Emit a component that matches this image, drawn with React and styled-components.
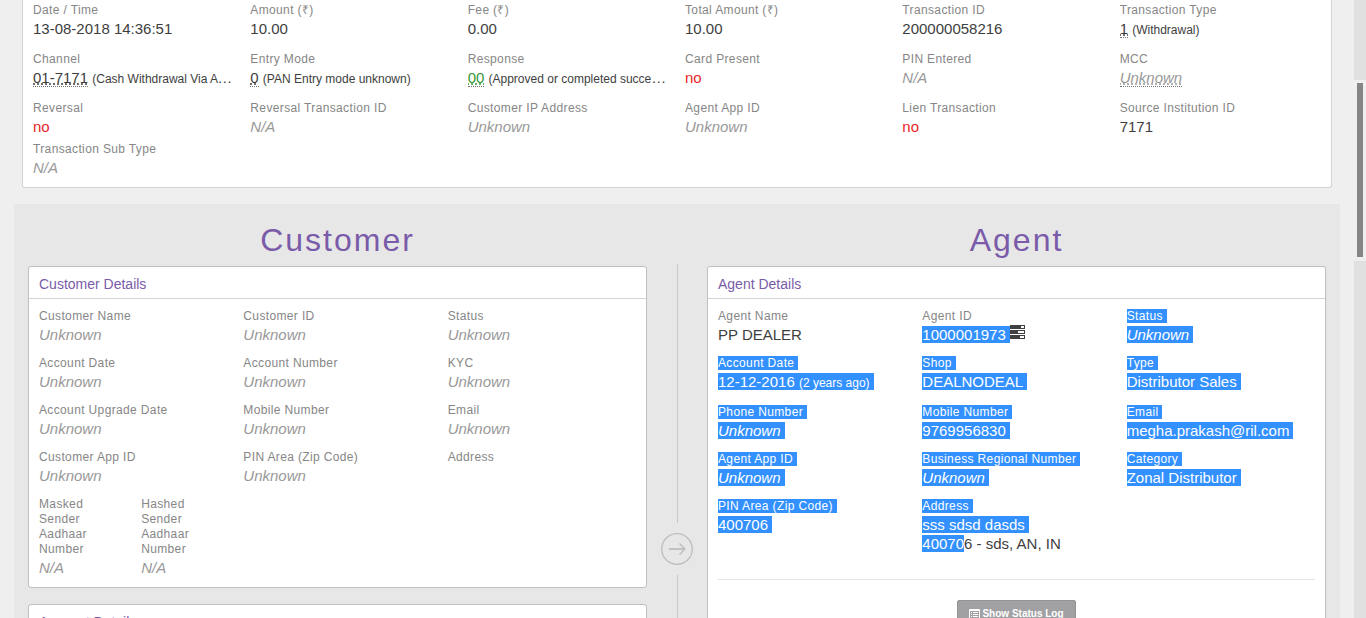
import React from "react";
import styled, { createGlobalStyle, css } from "styled-components";

const GlobalStyle = createGlobalStyle`
  *, *::before, *::after { box-sizing: border-box; }
  body {
    margin: 0;
    background: #efefef;
    color: #3e3e3e;
    font-family: "Liberation Sans", Arial, sans-serif;
    font-size: 15px;
    line-height: 19px;
  }
`;

const Page = styled.div`
  display: flex;
  height: 100vh;
  overflow: hidden;
`;

const Content = styled.main`
  flex: 1;
  min-width: 0;
  padding: 0 14px;
`;

const ScrollTrack = styled.div`
  flex: none;
  width: 12px;
  padding-top: 80px;
  background: #e0e0e0;
`;

const ScrollRegion = styled.div`
  height: 181px;
  padding: 3px;
  background: #efefef;
`;

const ScrollThumb = styled.div`
  width: 6px;
  height: 174px;
  background: #858585;
`;

const Summary = styled.section`
  margin: 0 8px 16px;
  padding: 3px 10px 10px;
  background: #fff;
  border: 1px solid #d4d4d4;
  border-top: 0;
  border-radius: 0 0 3px 3px;
`;

const Fields = styled.dl`
  display: grid;
  grid-template-columns: repeat(${(p) => p.$columns}, minmax(0, 1fr));
  column-gap: 16px;
  margin: 0;
  padding-bottom: ${(p) => p.$after || 0}px;
`;

const FieldBox = styled.div`
  min-width: 0;
`;

const Label = styled.dt`
  margin-bottom: 1px;
  color: #868686;
  font-size: 12px;
  line-height: 15px;
  letter-spacing: 0.03em;
`;

const Value = styled.dd`
  margin: 0;
  overflow: hidden;
  text-overflow: ellipsis;
  white-space: nowrap;
  color: ${(p) => (p.$tone === "no" ? "#e8262a" : p.$tone === "empty" ? "#999" : "inherit")};
  font-style: ${(p) => (p.$tone === "empty" ? "italic" : "normal")};
`;

const Note = styled.small`
  font-size: 12px;
`;

const Code = styled.abbr`
  color: ${(p) => (p.$ok ? "#339933" : "inherit")};
  text-decoration: underline dotted;
  text-decoration-skip-ink: none;
  border-bottom: 1px dotted #777;
`;

const Marked = styled.span`
  ${(p) =>
    p.$on &&
    css`
      padding-right: ${p.$partial ? 0 : 4}px;
      color: #fff;
      background: #3390ff;
    `}
`;

const Parties = styled.div`
  display: grid;
  grid-template-columns: minmax(0, 1fr) 32px minmax(0, 1fr);
  column-gap: 14px;
  padding: 0 14px;
  background: #e7e7e7;
`;

const Party = styled.section`
  display: flex;
  flex-direction: column;
  gap: 16px;
`;

const PartyTitle = styled.h1`
  height: 46px;
  margin: 0;
  padding-top: 16px;
  color: #7a5ba9;
  font-size: 32px;
  font-weight: 400;
  line-height: 40px;
  letter-spacing: 2px;
  text-align: center;
`;

const Panel = styled.article`
  background: #fff;
  border: 1px solid #bfbfbf;
  border-radius: 3px;
`;

const PanelTitle = styled.h2`
  margin: 0;
  padding: 8px 10px 4px;
  border-bottom: 1px solid #d4d4d4;
  color: #7a5ba9;
  font-size: 14px;
  font-weight: 400;
`;

const PanelBody = styled.div`
  padding: 10px;
`;

const Divider = styled.div`
  display: flex;
  flex-direction: column;
  align-items: center;
  gap: 10px;
  padding-top: 60px;
`;

const Line = styled.span`
  width: 1px;
  height: 259px;
  background: #c9c9c9;
`;

const Actions = styled.footer`
  display: flex;
  justify-content: center;
  padding: 20px 0 10px;
  border-top: 1px solid #e5e5e5;
`;

const LogButton = styled.button`
  display: flex;
  align-items: center;
  gap: 2px;
  padding: 4px 11px;
  background: #a1a1a4;
  border: 1px solid #929292;
  border-radius: 2px;
  color: #fff;
  font: bold 10px/18px "Liberation Sans", Arial, sans-serif;
`;

const ServerSvg = styled.svg`
  vertical-align: top;
`;

function ArrowIcon() {
  return (
    <svg width="32" height="32" viewBox="0 0 32 32" fill="none" stroke="#bdbdbd">
      <circle cx="16" cy="16" r="15.3" strokeWidth="1.3" />
      <path d="M8 16H23.5" strokeWidth="1.8" />
      <path d="M18.5 10.5L24 16L18.5 21.5" strokeWidth="1.3" />
    </svg>
  );
}

function ServerIcon() {
  return (
    <ServerSvg width="15" height="16" viewBox="0 0 15 16">
      <path fill="#404040" d="M0 0h15v4H0zM0 5h15v4H0zM0 10h15v4H0z" />
      <path fill="#fff" d="M11 1h3v2h-3zM8 6h6v2H8zM10 11h4v2h-4z" />
    </ServerSvg>
  );
}

function ListIcon() {
  return (
    <svg width="11" height="11" viewBox="0 0 11 11">
      <path fill="none" stroke="#fff" d="M.5 .5h10v10H.5z" />
      <path stroke="#fff" d="M0 1.5h11M2 3.5h1M4 3.5h5M2 5.5h1M4 5.5h5M2 7.5h1M4 7.5h5" />
    </svg>
  );
}

function Field({ label, children, tone, marked, markedLabel = marked }) {
  return (
    <FieldBox>
      <Label>
        <Marked $on={markedLabel}>{label}</Marked>
      </Label>
      <Value $tone={tone}>
        <Marked $on={marked}>{children}</Marked>
      </Value>
    </FieldBox>
  );
}

const Unknown = (props) => <Field tone="empty" {...props}>Unknown</Field>;
const NotAvailable = (props) => <Field tone="empty" {...props}>N/A</Field>;
const No = (props) => <Field tone="no" {...props}>no</Field>;

function TransactionSummary() {
  return (
    <Summary>
      <Fields $columns={6} $after={12}>
        <Field label="Date / Time">13-08-2018 14:36:51</Field>
        <Field label="Amount (₹)">10.00</Field>
        <Field label="Fee (₹)">0.00</Field>
        <Field label="Total Amount (₹)">10.00</Field>
        <Field label="Transaction ID">200000058216</Field>
        <Field label="Transaction Type">
          <Code>1</Code> <Note>(Withdrawal)</Note>
        </Field>
      </Fields>
      <Fields $columns={6} $after={12}>
        <Field label="Channel">
          <Code>01-7171</Code> <Note>(Cash Withdrawal Via ATM)</Note>
        </Field>
        <Field label="Entry Mode">
          <Code>0</Code> <Note>(PAN Entry mode unknown)</Note>
        </Field>
        <Field label="Response">
          <Code $ok>00</Code> <Note>(Approved or completed successfully)</Note>
        </Field>
        <No label="Card Present" />
        <NotAvailable label="PIN Entered" />
        <Field label="MCC" tone="empty">
          <Code>Unknown</Code>
        </Field>
      </Fields>
      <Fields $columns={6} $after={6}>
        <No label="Reversal" />
        <NotAvailable label="Reversal Transaction ID" />
        <Unknown label="Customer IP Address" />
        <Unknown label="Agent App ID" />
        <No label="Lien Transaction" />
        <Field label="Source Institution ID">7171</Field>
      </Fields>
      <Fields $columns={6}>
        <NotAvailable label="Transaction Sub Type" />
      </Fields>
    </Summary>
  );
}

function CustomerDetails() {
  return (
    <Panel>
      <PanelTitle>Customer Details</PanelTitle>
      <PanelBody>
        <Fields $columns={3} $after={12}>
          <Unknown label="Customer Name" />
          <Unknown label="Customer ID" />
          <Unknown label="Status" />
        </Fields>
        <Fields $columns={3} $after={12}>
          <Unknown label="Account Date" />
          <Unknown label="Account Number" />
          <Unknown label="KYC" />
        </Fields>
        <Fields $columns={3} $after={12}>
          <Unknown label="Account Upgrade Date" />
          <Unknown label="Mobile Number" />
          <Unknown label="Email" />
        </Fields>
        <Fields $columns={3} $after={12}>
          <Unknown label="Customer App ID" />
          <Unknown label="PIN Area (Zip Code)" />
          <Field label="Address" />
        </Fields>
        <Fields $columns={6}>
          <NotAvailable label="Masked Sender Aadhaar Number" />
          <NotAvailable label="Hashed Sender Aadhaar Number" />
        </Fields>
      </PanelBody>
    </Panel>
  );
}

function AgentDetails() {
  return (
    <Panel>
      <PanelTitle>Agent Details</PanelTitle>
      <PanelBody>
        <Fields $columns={3} $after={12}>
          <Field label="Agent Name">PP DEALER</Field>
          <FieldBox>
            <Label>Agent ID</Label>
            <Value>
              <Marked $on>1000001973</Marked>
              <ServerIcon />
            </Value>
          </FieldBox>
          <Unknown label="Status" marked />
        </Fields>
        <Fields $columns={3} $after={12}>
          <Field label="Account Date" marked>
            12-12-2016 <Note>(2 years ago)</Note>
          </Field>
          <Field label="Shop" marked>DEALNODEAL</Field>
          <Field label="Type" marked>Distributor Sales</Field>
        </Fields>
        <Fields $columns={3} $after={12}>
          <Unknown label="Phone Number" marked />
          <Field label="Mobile Number" marked>9769956830</Field>
          <Field label="Email" marked>megha.prakash@ril.com</Field>
        </Fields>
        <Fields $columns={3} $after={12}>
          <Unknown label="Agent App ID" marked />
          <Unknown label="Business Regional Number" marked />
          <Field label="Category" marked>Zonal Distributor</Field>
        </Fields>
        <Fields $columns={3} $after={26}>
          <Field label="PIN Area (Zip Code)" marked>400706</Field>
          <FieldBox>
            <Label>
              <Marked $on>Address</Marked>
            </Label>
            <Value>
              <Marked $on>sss sdsd dasds</Marked>
              <br />
              <Marked $on $partial>40070</Marked>6 - sds, AN, IN
            </Value>
          </FieldBox>
        </Fields>
        <Actions>
          <LogButton type="button">
            <ListIcon />
            Show Status Log
          </LogButton>
        </Actions>
      </PanelBody>
    </Panel>
  );
}

export default function App() {
  return (
    <>
      <GlobalStyle />
      <Page>
        <Content>
          <TransactionSummary />
          <Parties>
            <Party>
              <PartyTitle>Customer</PartyTitle>
              <CustomerDetails />
              <Panel>
                <PanelTitle>Account Details</PanelTitle>
                <PanelBody />
              </Panel>
            </Party>
            <Divider>
              <Line />
              <ArrowIcon />
              <Line />
            </Divider>
            <Party>
              <PartyTitle>Agent</PartyTitle>
              <AgentDetails />
            </Party>
          </Parties>
        </Content>
        <ScrollTrack>
          <ScrollRegion>
            <ScrollThumb />
          </ScrollRegion>
        </ScrollTrack>
      </Page>
    </>
  );
}
